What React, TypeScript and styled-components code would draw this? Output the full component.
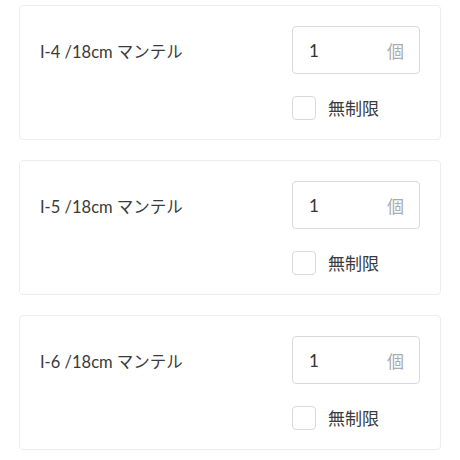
import React from "react";
import styled, { createGlobalStyle } from "styled-components";

const Global = createGlobalStyle`
  html, body { margin: 0; padding: 0; background: #fff; }
  body { font-family: Lato, "Noto Sans CJK JP", sans-serif; color: #333; }
`;

const Page = styled.div`
  display: flex;
  flex-direction: column;
  gap: 20px;
  padding: 5px 19px 0 19px;
  width: 460px;
  box-sizing: border-box;
`;

const Card = styled.div`
  display: flex;
  justify-content: space-between;
  align-items: flex-start;
  padding: 20px;
  border: 1px solid #ebedef;
  border-radius: 4px;
  background: #fff;
  height: 135px;
  box-sizing: border-box;
`;

const Label = styled.div`
  font-size: 16.5px;
  line-height: 48px;
  padding-top: 2px;
  color: #3a3a3a;
`;

const Controls = styled.div`
  display: flex;
  flex-direction: column;
  gap: 21px;
  width: 128px;
`;

const InputBox = styled.div`
  display: flex;
  align-items: center;
  justify-content: space-between;
  height: 48px;
  box-sizing: border-box;
  padding: 0 15px 0 16px;
  border: 1px solid #d6d9dd;
  border-radius: 4px;
`;

const Value = styled.span`
  font-size: 17px;
  color: #333;
`;

const Unit = styled.span`
  font-size: 17px;
  color: #a8abaf;
`;

const CheckRow = styled.label`
  display: flex;
  align-items: center;
  gap: 12px;
  font-size: 17px;
  color: #3a3a3a;
`;

const Box = styled.span`
  width: 24px;
  height: 24px;
  box-sizing: border-box;
  border: 1px solid #d6d9dd;
  border-radius: 4px;
  background: #fff;
`;

const items = ["I-4 /18cm マンテル", "I-5 /18cm マンテル", "I-6 /18cm マンテル"];

export default function App() {
  return (
    <>
      <Global />
      <Page>
        {items.map((t) => (
          <Card key={t}>
            <Label>{t}</Label>
            <Controls>
              <InputBox>
                <Value>1</Value>
                <Unit>個</Unit>
              </InputBox>
              <CheckRow>
                <Box />
                無制限
              </CheckRow>
            </Controls>
          </Card>
        ))}
      </Page>
    </>
  );
}
